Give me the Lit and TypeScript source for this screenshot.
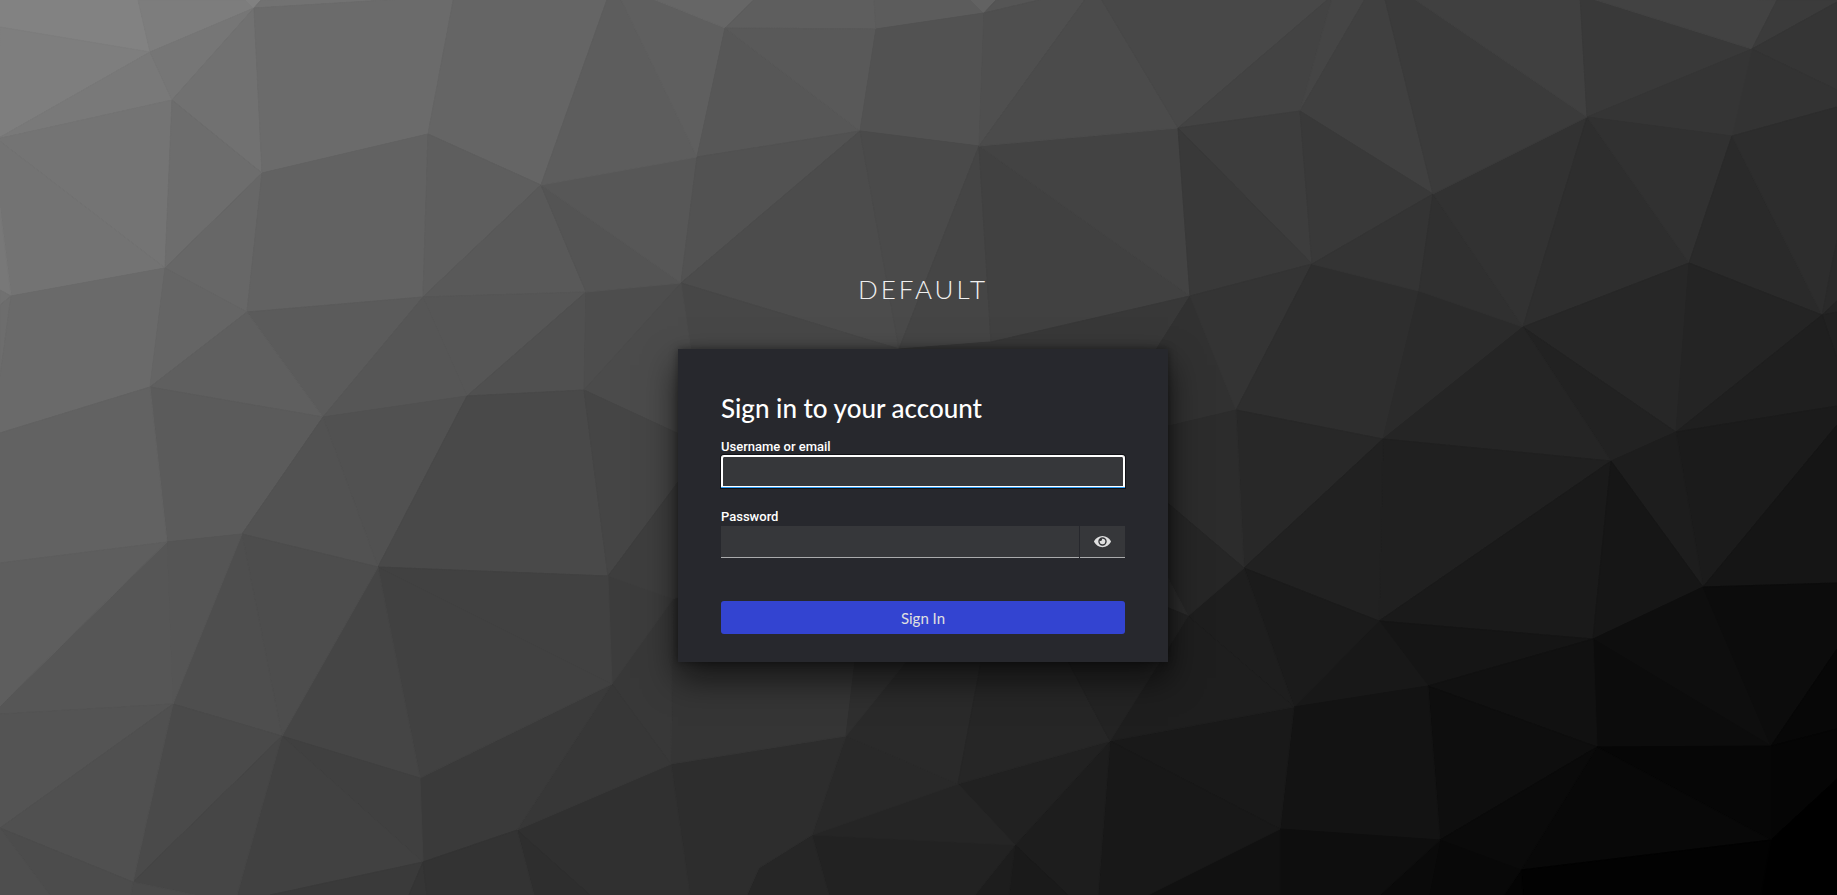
import { LitElement, css, html, svg } from "lit";
import { customElement, state } from "lit/decorators.js";

// Named corners of the backdrop mesh.
const corners: Record<string, [number, number]> = {
  A: [150, 52], B: [172, 100], C: [254, 8], D: [262, 173], E: [428, 134],
  F: [165, 268], G: [11, 296], H: [247, 312], I: [423, 297], J: [150, 387],
  K: [323, 417], M: [-3, 139], Z: [454, -4], L: [467, 396], P: [541, 185],
  Y: [613, -17], Q: [725, 28], R: [697, 157], S: [586, 292], T: [681, 283],
  U: [876, 29], V: [860, 131], W: [584, 390], X: [899, 349],
  AA: [984, 13], AB: [979, 146], AC: [1178, 128], AD: [1094, -13],
  AE: [1300, 111], AF: [1333, -5], AG: [1433, 194], AH: [1379, -25],
  AI: [1587, 117], AJ: [1580, -5], AK: [1752, 49], AL: [1732, 136],
  AM: [991, 342], AN: [1190, 296], AO: [1312, 264], AP: [1236, 410],
  AQ: [1419, 291], AR: [1523, 327], AS: [1689, 263], AT: [1822, 315],
  AU: [1676, 432], AV: [1611, 461], AW: [1383, 439], AX: [1703, 587],
  AY: [1593, 639], AZ: [1379, 621], BA: [1428, 686], BB: [1244, 568],
  BC: [1188, 616], BD: [1294, 707], BE: [1280, 829], BF: [1440, 840],
  BG: [1597, 747], BH: [1771, 746], BI: [1771, 840], BJ: [1521, 870],
  BK: [1110, 741], BL: [1015, 845], BM: [958, 784], BN: [812, 835],
  BO: [846, 736], BP: [759, 868], BQ: [671, 764], BR: [612, 684],
  BS: [517, 830], BT: [608, 576], BU: [673, 599], BV: [378, 567],
  BW: [242, 534], BX: [420, 778], BY: [167, 542], BZ: [173, 704],
  CA: [282, 736], CB: [133, 882], CC: [423, 862],
  H1: [705, 446], H3: [1097, 443], H4: [1004, 540], H5: [872, 520],
};

// Each facet: its corners (names, or x,y pairs on the border) and its grey level.
const facets: [string, number][] = [
  ["0,0 138,0 A 0,27", 130], ["0,27 A M", 126], ["138,0 246,0 C A", 125],
  ["246,0 261,0 C", 129], ["261,0 Z C", 114], ["A B M", 121], ["A C B", 118],
  ["B C D", 113], ["C Z E D", 107], ["M B F", 116], ["M F G 0,208", 115],
  ["0,208 G 0,290", 120], ["0,290 G 0,305", 113], ["0,305 G 0,377", 109],
  ["G F J 0,433 0,377", 106], ["B D F", 109], ["D H F", 103], ["F H J", 101],
  ["D E I H", 98], ["Z Y P E", 101], ["E P I", 94], ["H I K", 91],
  ["H K J", 95], ["J K BW BY", 91], ["J BY 0,563 0,433", 98], ["I P S", 89],
  ["I S L", 86], ["I L K", 86], ["K L BV", 81], ["K BV BW", 82],
  ["S W L", 80], ["S T W", 77], ["P T S", 84], ["P R T", 87],
  ["P Y R", 93], ["Y Q R", 95], ["Y 774,-20 Q", 102], ["Q 754,0 874,0 U", 94],
  ["Q V R", 87], ["Q U V", 89], ["R V T", 82], ["U 874,0 971,0 AA", 92],
  ["971,0 996,0 AA", 98], ["996,0 AD AA", 85], ["U AA AB V", 82],
  ["AA AD AB", 79], ["V X T", 76], ["V AB X", 74], ["T X H1", 71],
  ["W T H1", 75], ["L W BT BV", 73], ["W H1 BT", 69], ["AB AM X", 69],
  ["AB AN AM", 65], ["AB AC AN", 67], ["AD AC AB", 75], ["AD AF AC", 72],
  ["AC AF AE", 67], ["AF AH AE", 69], ["AH AG AE", 64], ["AC AE AO", 61],
  ["AC AO AN", 57], ["AE AG AO", 57], ["X AM AN H3 H5 H1", 56],
  ["AN AP H3", 49], ["AN AO AP", 52], ["AO AQ AW AP", 46], ["AO AG AQ", 52],
  ["AQ AR AW", 43], ["AG AR AQ", 48], ["AG AI AR", 50], ["AI AS AR", 46],
  ["AH AI AG", 59], ["AH AJ AI", 64], ["AJ AK AI", 57],
  ["AJ 1777,0 AK", 66], ["1777,0 1837,0 1837,2 AK", 59],
  ["AK 1837,2 1837,90", 53], ["AK 1837,90 1837,107 AL", 51],
  ["AI AK AL", 53], ["AI AL AS", 49], ["AL AT AS", 42],
  ["AL 1837,107 1837,240 AT", 45], ["1837,240 1837,301 AT", 42],
  ["1837,301 1837,312 AT", 36], ["1837,312 1837,358 AT", 33],
  ["AR AS AU", 39], ["AS AT AU", 36], ["AT 1837,358 1837,406 AU", 31],
  ["AR AU AV", 34], ["AR AV AW", 37], ["AP AW BB", 40], ["AP BB H3", 44],
  ["AU 1837,406 1837,425 AX", 27], ["AX 1837,425 1837,583", 21],
  ["AU AX AV", 29], ["AW AV AZ", 32], ["AW AZ BB", 33], ["AV AY AZ", 26],
  ["AV AX AY", 22], ["AZ AY BA", 21], ["AZ BA BD", 24], ["BB AZ BD", 27],
  ["BB BD BC", 30], ["H3 BB BC", 38], ["H3 BC H4 H5", 44],
  ["AX BH AY", 14], ["AX 1837,583 1837,649 BH", 12], ["AY BH BG", 12],
  ["BA AY BG", 17], ["BA BG BF", 14], ["BD BA BF BE", 19],
  ["BD BE BK", 25], ["BC BD BK", 30], ["BH 1837,649 1837,729", 7],
  ["BH 1837,729 1837,779 BI", 5], ["BI 1837,779 1837,895 1761,895", 0],
  ["BG BH BI", 6], ["BG BI BJ", 8], ["BG BJ BF", 10],
  ["BJ BI 1761,895 1523,895", 2], ["BJ 1504,895 1523,895", 4],
  ["BF BJ 1504,895 1429,895", 8], ["BF 1380,895 1429,895", 10],
  ["BE BF 1380,895 1280,895", 14], ["BE 1280,895 1148,895", 17],
  ["BK BE 1148,895 1098,895", 24], ["BK 1098,895 1068,895 BL", 29],
  ["BL 1068,895 1009,895", 26], ["BL 1009,895 975,895", 29],
  ["BN BL 975,895 829,895", 34], ["BM BK BL", 33], ["BM BL BN", 37],
  ["BO BM BN", 41], ["BO H4 BM", 42], ["H4 BK BM", 38], ["H4 BC BK", 35],
  ["BN 829,895 747,895 BP", 38], ["BO BN BP 747,895 690,895 BQ", 45],
  ["BQ 690,895 590,895 BS", 48], ["BS 590,895 534,895", 46],
  ["BU H5 BO BQ", 53], ["H5 H4 BO", 47], ["BR BU BQ", 56], ["BR BQ BS", 55],
  ["BX BR BS CC", 58], ["BT BU BR", 60], ["BT H1 H5 BU", 62],
  ["BV BT BR", 65], ["BV BR BX", 65], ["BV BX CA", 69], ["CA BX CC", 64],
  ["CA CC 270,895 237,895", 65], ["CC 409,895 270,895", 58],
  ["CC 427,895 409,895", 53], ["CC BS 534,895 427,895", 51],
  ["BW BV CA", 77], ["BW CA BZ", 78], ["BZ CA CB", 74],
  ["CA 237,895 195,895 CB", 70], ["CB 195,895 131,895", 74],
  ["BY BW BZ", 85], ["BY BZ 0,714 0,706", 86], ["BY 0,706 0,563", 94],
  ["BZ 0,828 0,714", 84], ["BZ CB 0,828", 80], ["0,828 CB 131,895 50,895", 76],
  ["0,828 50,895 0,895", 78],
];

const toPoints = (facet: string) =>
  facet.split(" ").map((p) => (p.includes(",") ? p : corners[p].join(","))).join(" ");

@customElement("mesh-backdrop")
class MeshBackdrop extends LitElement {
  static styles = css`
    :host { display: block; overflow: hidden; background: #2a2a2a; }
    .mesh { display: block; width: 100%; height: 100%; }
  `;

  render() {
    return html`<svg class="mesh" viewBox="0 0 1837 895" preserveAspectRatio="xMidYMid slice" aria-hidden="true">
      ${facets.map(([points, grey]) => {
        const tone = `rgb(${grey},${grey},${grey})`;
        return svg`<polygon points=${toPoints(points)} fill=${tone} stroke=${tone} stroke-width="1" stroke-linejoin="round"></polygon>`;
      })}
    </svg>`;
  }
}

@customElement("app-root")
class AppRoot extends LitElement {
  static styles = css`
    :host {
      display: grid;
      min-height: 100vh;
      color: #fff;
      font-family: Roboto, "Liberation Sans", sans-serif;
      font-size: 14px;
      line-height: 20px;
    }
    * { box-sizing: border-box; }
    .backdrop { grid-area: 1 / 1; height: 100vh; position: sticky; top: 0; }
    .page {
      grid-area: 1 / 1;
      z-index: 1;
      display: flex;
      flex-direction: column;
      align-items: center;
      gap: 40px;
      padding: 269px 0 40px 9px;
    }
    .realm {
      font: 300 26px/40px Lato, sans-serif;
      letter-spacing: 3px;
      text-transform: uppercase;
      color: #f0f0f0;
    }
    .card {
      width: 100%;
      max-width: 490px;
      padding: 43px 43px 28px;
      background: #27282d;
      box-shadow: 0 16px 32px 0 rgba(3, 3, 3, 0.64), 0 0 8px 0 rgba(3, 3, 3, 0.4);
    }
    .title { margin: 0 0 12px; font: 500 26px/32px Lato, sans-serif; }
    .form { display: flex; flex-direction: column; }
    .label { height: 20px; font-weight: 500; font-size: 13px; line-height: 22px; }
    .field { display: flex; flex-direction: column; margin-bottom: 18px; }
    .input {
      width: 100%;
      min-width: 0;
      height: 32px;
      padding: 0 8px;
      border: 0;
      border-bottom: 1px solid #aaabac;
      border-radius: 0;
      outline: 0;
      background: #36373a;
      color: #e0e0e0;
      font: inherit;
    }
    .input.active {
      border-bottom-color: #2b9af3;
      border-radius: 3px 3px 0 0;
      box-shadow:
        inset 2px 0 0 #fff, inset -2px 0 0 #fff, inset 0 1px 0 #fff, inset 0 -1px 0 #fff,
        0 -1px 0 #fff, 0 -1px 0 1px #101014, 0 0 0 1px #101014;
    }
    .group { display: flex; gap: 1px; }
    .reveal {
      flex: none;
      display: grid;
      place-items: center;
      width: 45px;
      height: 32px;
      padding: 0;
      border: 0;
      border-bottom: 1px solid #aaabac;
      background: #36373a;
      color: #e0e0e0;
    }
    .eye { display: block; width: 17px; height: 15px; fill: currentColor; }
    .submit {
      height: 33px;
      margin-top: 25px;
      border: 0;
      border-radius: 3px;
      background: #3344d1;
      color: #e0e0e0;
      font: 400 15px/20px Lato, sans-serif;
    }
  `;

  @state() private shown = false;

  render() {
    return html`
      <mesh-backdrop class="backdrop"></mesh-backdrop>
      <div class="page">
        <header class="realm">Default</header>
        <main class="card">
          <h1 class="title">Sign in to your account</h1>
          <form class="form" @submit=${(e: Event) => e.preventDefault()}>
            <div class="field">
              <label class="label" for="username">Username or email</label>
              <input class="input active" id="username" type="text" autocomplete="username" />
            </div>
            <div class="field">
              <label class="label" for="password">Password</label>
              <div class="group">
                <input class="input" id="password" type=${this.shown ? "text" : "password"} autocomplete="current-password" />
                <button class="reveal" type="button" aria-label="Show password" @click=${() => (this.shown = !this.shown)}>
                  <svg class="eye" viewBox="0 0 576 512" aria-hidden="true">
                    <path d="M572.52 241.4C518.29 135.59 410.93 64 288 64S57.68 135.64 3.48 241.41a32.35 32.35 0 0 0 0 29.19C57.71 376.41 165.07 448 288 448s230.32-71.64 284.52-177.41a32.35 32.35 0 0 0 0-29.19zM288 400a144 144 0 1 1 144-144 143.93 143.93 0 0 1-144 144zm0-240a95.31 95.31 0 0 0-25.31 3.79 47.85 47.85 0 0 1-66.9 66.9A95.78 95.78 0 1 0 288 160z"></path>
                  </svg>
                </button>
              </div>
            </div>
            <button class="submit" type="submit">Sign In</button>
          </form>
        </main>
      </div>
    `;
  }
}
